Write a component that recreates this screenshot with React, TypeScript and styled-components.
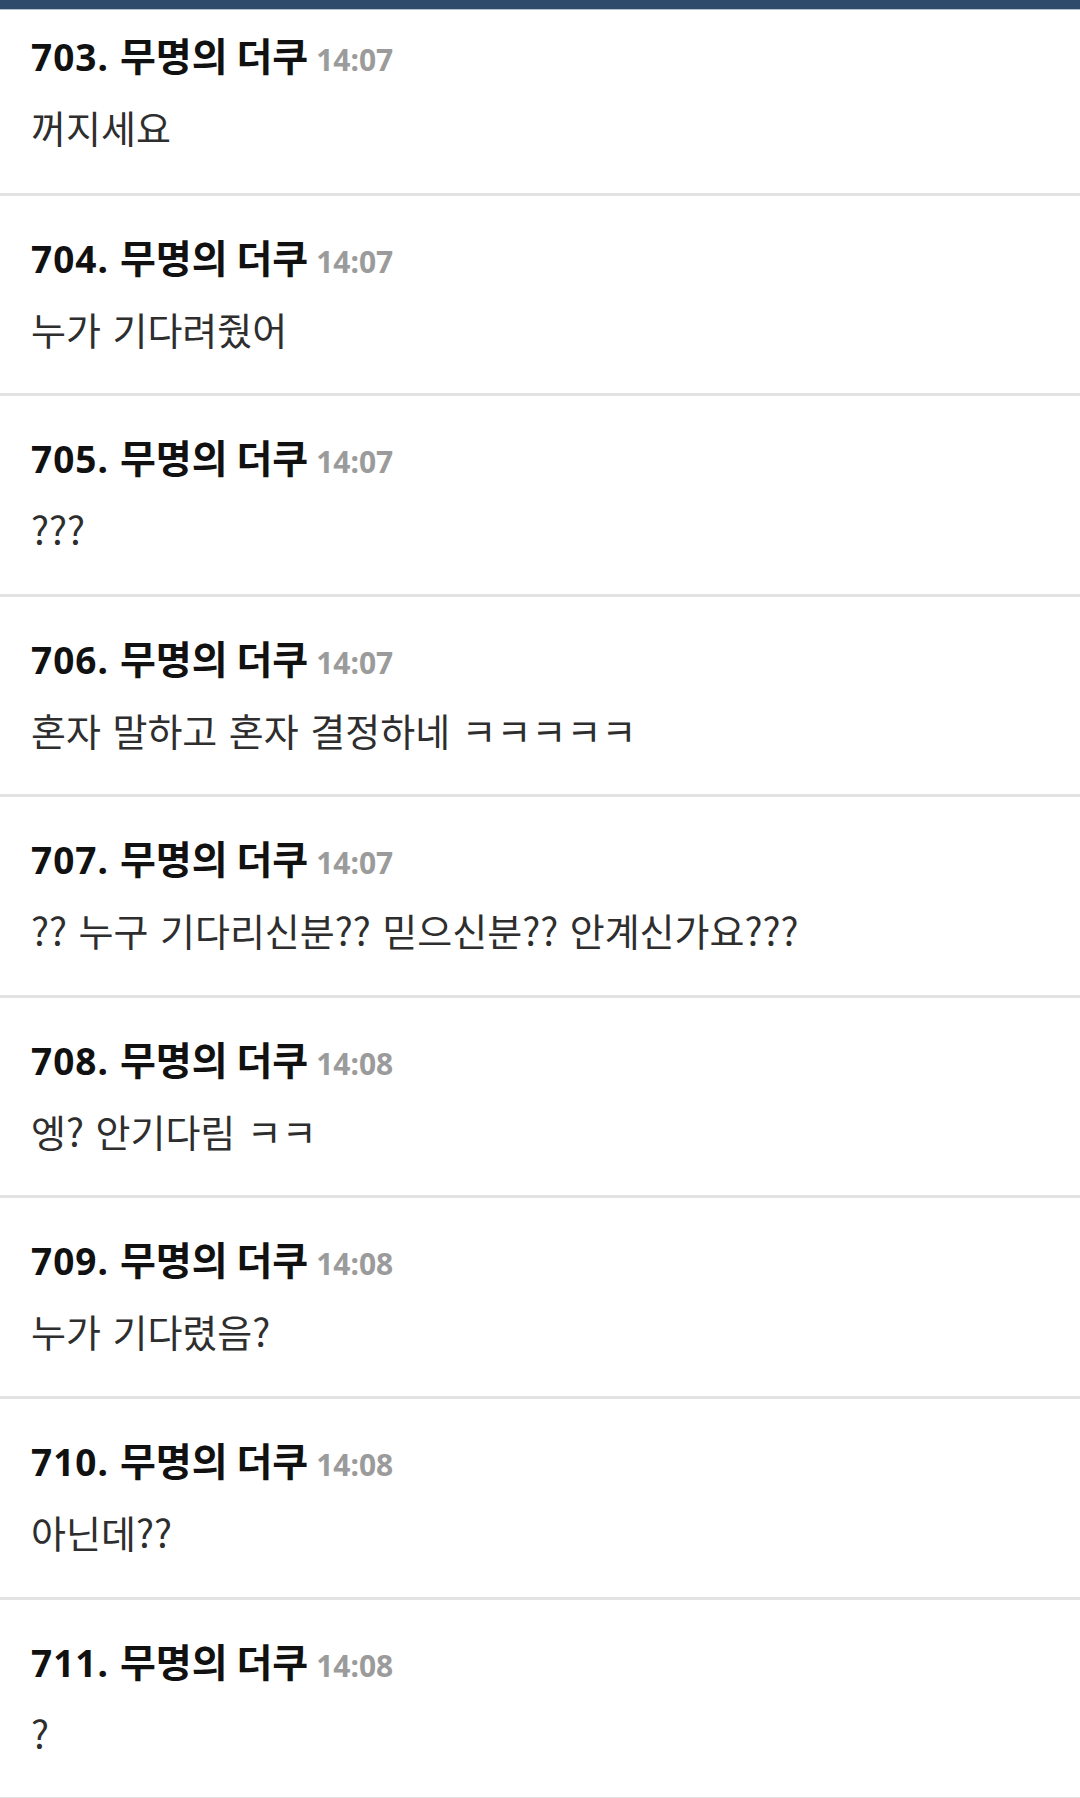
import styled, { createGlobalStyle } from 'styled-components';

const GlobalStyle = createGlobalStyle`
  html, body {
    margin: 0;
    padding: 0;
    background: #ffffff;
  }
  body {
    font-family: 'Noto Sans', 'Noto Sans CJK KR', sans-serif;
    -webkit-font-smoothing: antialiased;
  }
`

const Page = styled.div`
  width: 1080px;
  height: 1798px;
  overflow: hidden;
  background: #ffffff;
`

const TopBar = styled.div`
  height: 9px;
  background: #2f4b6c;
  border-bottom: 1px solid #b3c2cd;
`

const ReplyList = styled.div`
  display: flex;
  flex-direction: column;
`

const Reply = styled.article<{ $first?: boolean }>`
  box-sizing: border-box;
  height: ${p => (p.$first ? '185.5px' : '200.6px')};
  padding: ${p => (p.$first ? '24px' : '40px')} 31px 0;
  border-bottom: 3px solid #e3e3e3;
  display: flex;
  flex-direction: column;
  gap: 29px;
`

const ReplyHead = styled.div`
  display: flex;
  align-items: baseline;
  height: 40px;
  line-height: 40px;
  white-space: nowrap;
`

const ReplyNo = styled.span`
  font-family: 'Noto Sans', sans-serif;
  font-weight: 700;
  font-size: 37px;
  letter-spacing: 1px;
  color: #111111;
`

const Author = styled.span`
  font-family: 'Noto Sans CJK KR', 'Noto Sans', sans-serif;
  font-weight: 700;
  font-size: 39px;
  color: #111111;
  margin-left: 11px;
`

const Time = styled.span`
  font-family: 'Noto Sans', sans-serif;
  font-weight: 700;
  font-size: 30px;
  color: #9b9b9b;
  margin-left: 8px;
`

const ReplyBody = styled.p`
  margin: 0;
  font-family: 'Noto Sans CJK KR', 'Noto Sans', sans-serif;
  font-weight: 400;
  font-size: 38px;
  line-height: 48px;
  word-spacing: 3px;
  color: #2e2e2e;
  white-space: nowrap;
`

interface ReplyItem {
  no: number;
  time: string;
  text: string;
}

const replies: ReplyItem[] = [
  { no: 703, time: '14:07', text: '꺼지세요' },
  { no: 704, time: '14:07', text: '누가 기다려줬어' },
  { no: 705, time: '14:07', text: '???' },
  { no: 706, time: '14:07', text: '혼자 말하고 혼자 결정하네 ㅋㅋㅋㅋㅋ' },
  { no: 707, time: '14:07', text: '?? 누구 기다리신분?? 믿으신분?? 안계신가요???' },
  { no: 708, time: '14:08', text: '엥? 안기다림 ㅋㅋ' },
  { no: 709, time: '14:08', text: '누가 기다렸음?' },
  { no: 710, time: '14:08', text: '아닌데??' },
  { no: 711, time: '14:08', text: '?' },
]

const App = () => {
  return (
    <Page>
      <GlobalStyle />
      <TopBar />
      <ReplyList>
        {replies.map((r, i) => (
          <Reply key={r.no} $first={i === 0}>
            <ReplyHead>
              <ReplyNo>{r.no}.</ReplyNo>
              <Author>무명의 더쿠</Author>
              <Time>{r.time}</Time>
            </ReplyHead>
            <ReplyBody>{r.text}</ReplyBody>
          </Reply>
        ))}
      </ReplyList>
    </Page>
  )
}

export default App
